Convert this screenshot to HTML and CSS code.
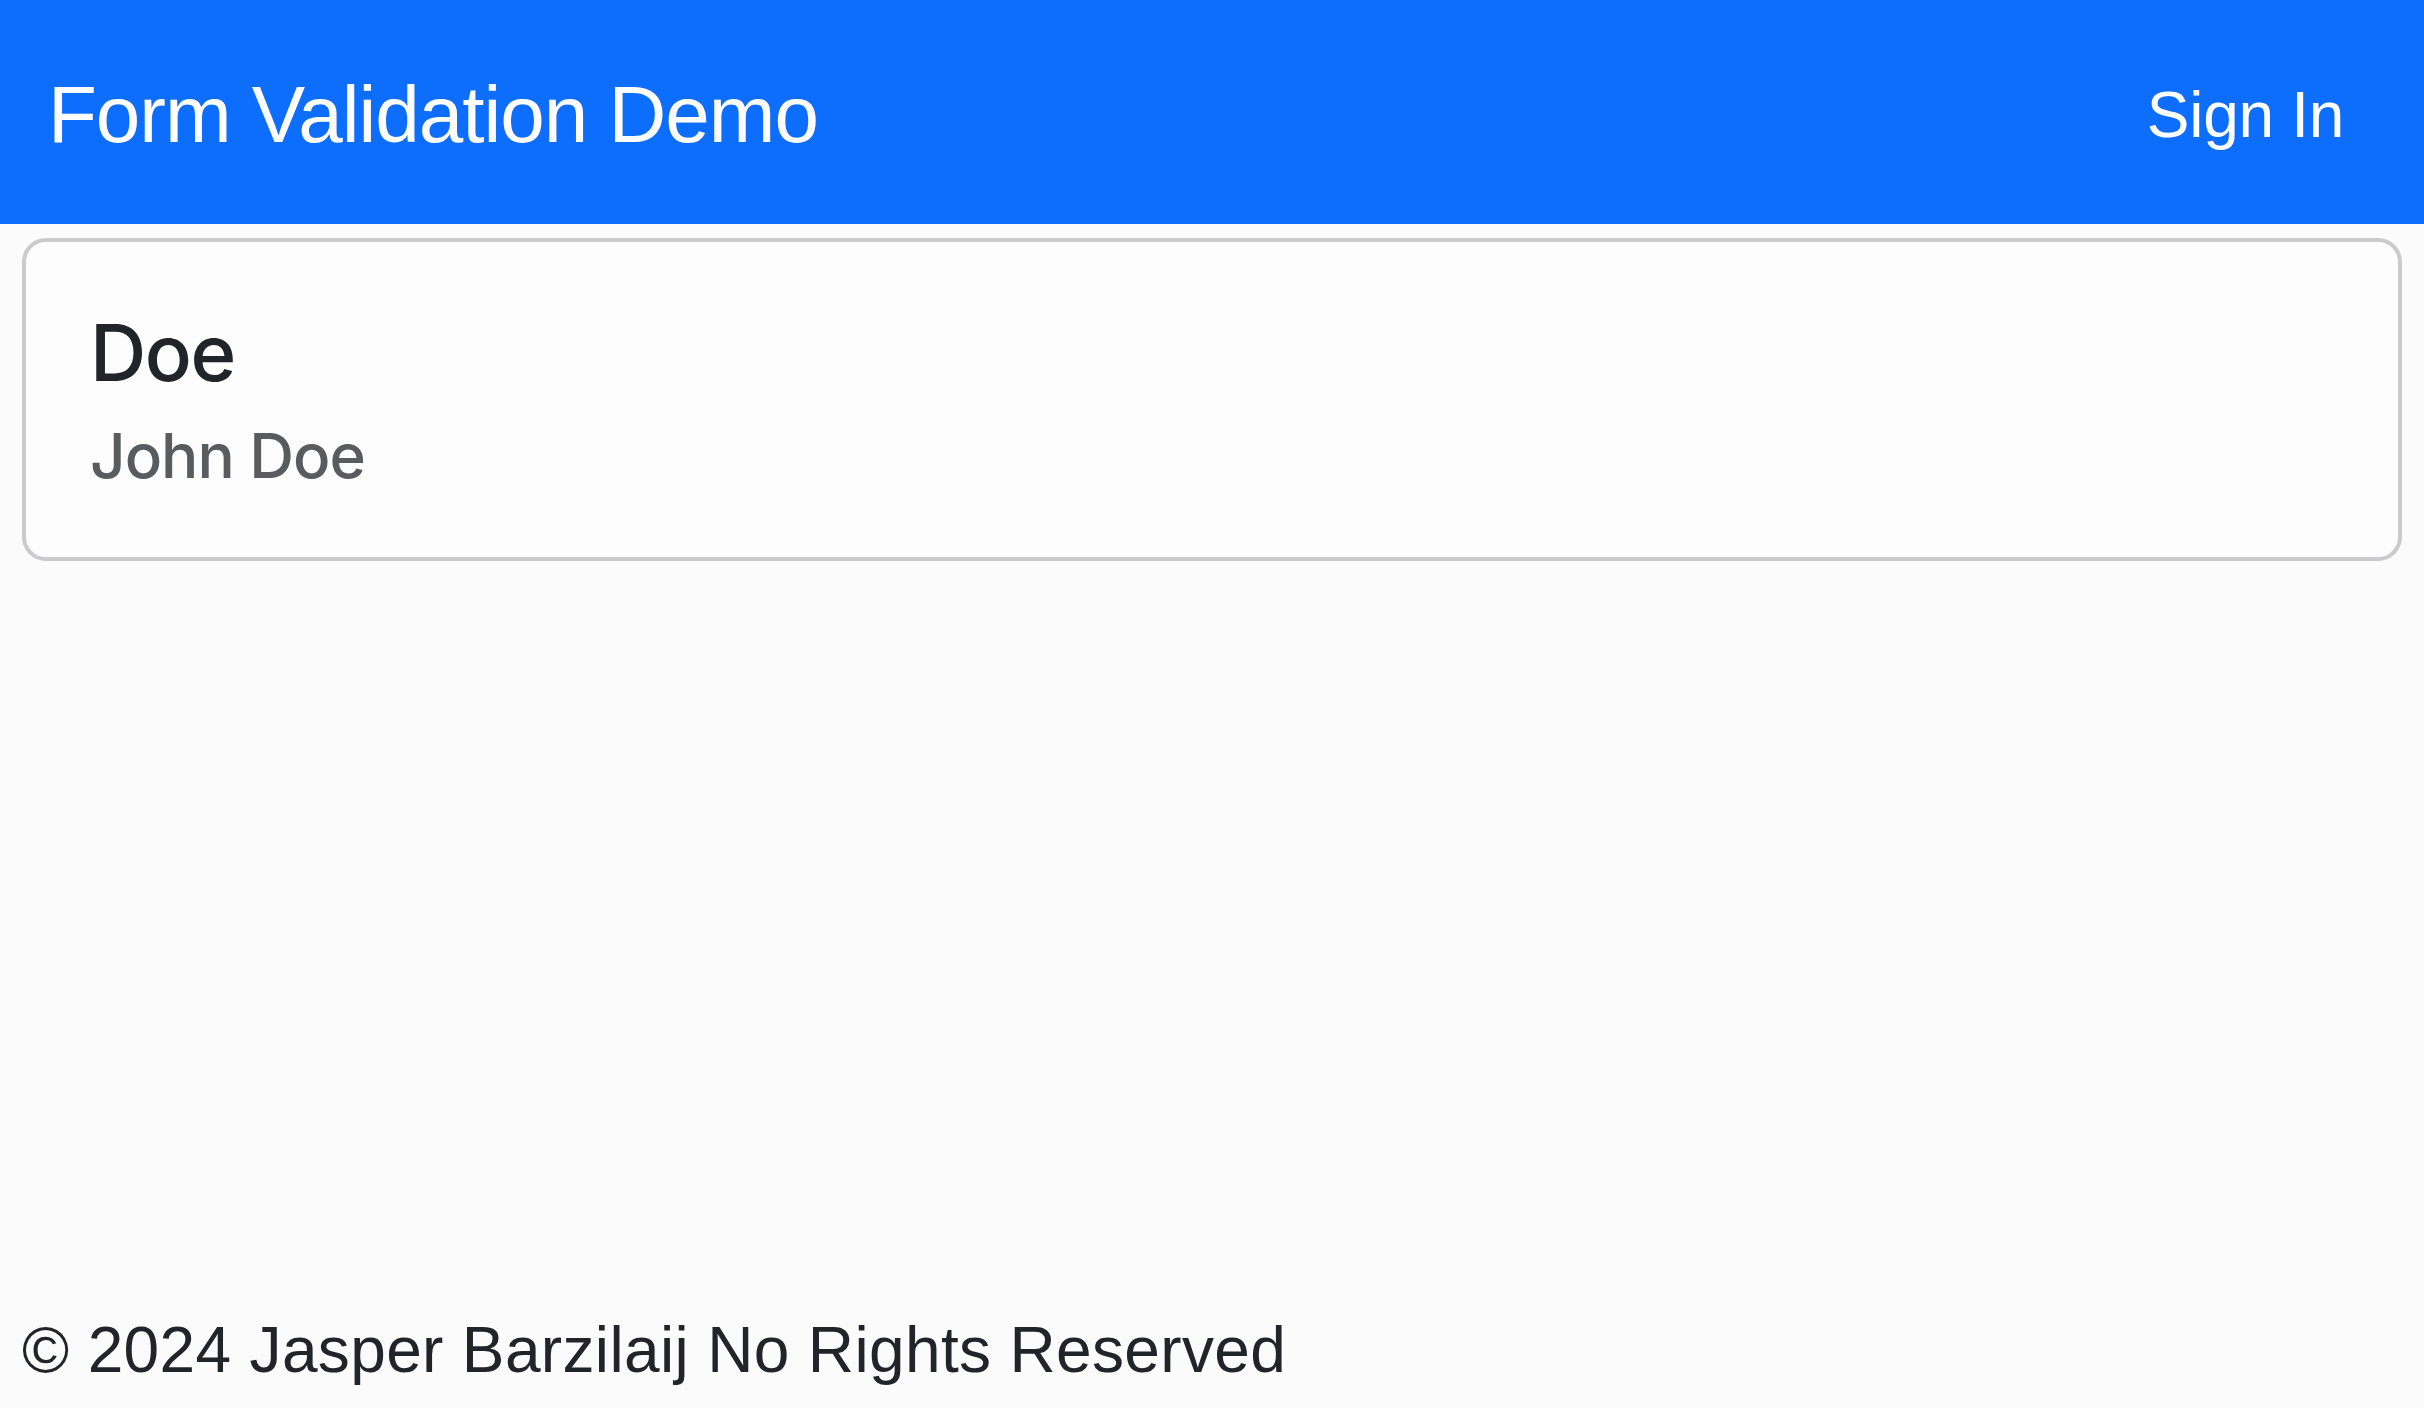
FILE: index.html
```html
<!DOCTYPE html>
<html lang="en">
<head>
<meta charset="utf-8">
<title>Form Validation Demo</title>
<link rel="stylesheet" href="styles.css">
</head>
<body>
<header class="navbar">
  <div class="navbar-inner">
    <a class="brand" href="#">Form Validation Demo</a>
    <a class="nav-link" href="#">Sign In</a>
  </div>
</header>
<main class="content">
  <div class="card">
    <div class="card-body">
      <h5 class="card-title">Doe</h5>
      <h6 class="card-subtitle">John Doe</h6>
    </div>
  </div>
</main>
<footer class="footer">© 2024 Jasper Barzilaij No Rights Reserved</footer>
</body>
</html>
```

FILE: styles.css
```css
* { box-sizing: border-box; }
html, body { height: 100%; }
body {
  margin: 0;
  background: #fbfbfc;
  color: #212529;
  font-family: "Liberation Sans", Arial, sans-serif;
  font-size: 64px;
  line-height: 1.5;
  display: flex;
  flex-direction: column;
  min-height: 100vh;
}
.navbar {
  background: #0d6efd;
  height: 224px;
  padding: 35px 48px 29px;
}
.navbar-inner {
  display: flex;
  align-items: center;
  justify-content: space-between;
  height: 160px;
}
.brand {
  color: #fff;
  text-decoration: none;
  font-size: 80px;
  line-height: 1.5;
  padding: 20px 0;
  letter-spacing: -1px;
}
.nav-link {
  color: #fff;
  text-decoration: none;
  font-size: 64px;
  line-height: 1.5;
  padding: 32px;
  letter-spacing: -0.3px;
}
.content {
  padding: 14px 22px 0;
}
.card {
  background: #fdfdfe;
  border: 4px solid #cbcbcd;
  border-radius: 24px;
}
.card-body {
  padding: 64px 64px 64px;
}
.card-title {
  margin: 0 0 32px;
  font-family: Inter, "Liberation Sans", sans-serif;
  font-size: 78px;
  font-weight: 500;
  line-height: 1.2;
  letter-spacing: -1.5px;
  color: #212529;
}
.card-subtitle {
  margin: -13px 0 0;
  font-family: Inter, "Liberation Sans", sans-serif;
  font-size: 62px;
  font-weight: 500;
  line-height: 1.2;
  letter-spacing: -1px;
  color: #595c5f;
}
.footer {
  margin-top: auto;
  padding: 0 22px 10px;
  font-size: 64px;
  line-height: 1.5;
  letter-spacing: 0.35px;
}
```
